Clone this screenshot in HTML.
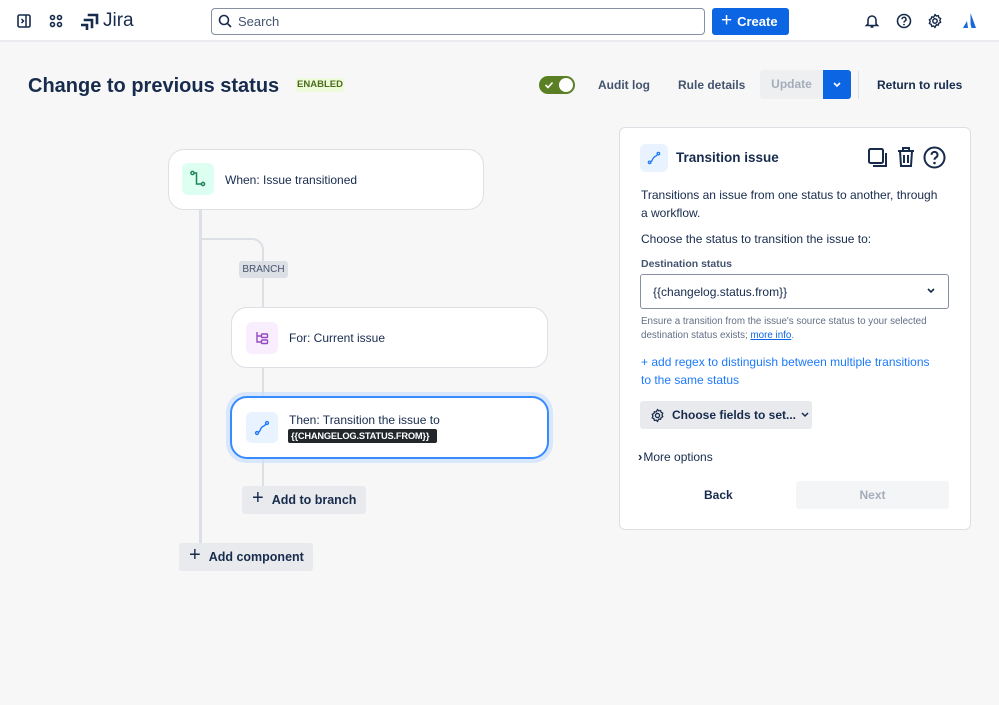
<!DOCTYPE html>
<html><head><meta charset="utf-8"><style>
*{box-sizing:border-box;margin:0;padding:0}
body{width:999px;height:705px;background:#f7f7f7;font-family:"Liberation Sans",sans-serif;color:#172b4d;position:relative;overflow:hidden;font-size:12px}
.a{position:absolute;white-space:nowrap}
.hdr{left:0;top:0;width:999px;height:42px;background:#fff;border-bottom:2px solid #ebecf0}
.card{background:#fff;border:1px solid #dcdfe4;border-radius:16px}
.ic{border-radius:6px;display:flex;align-items:center;justify-content:center}
.btn{background:#e9eaed;border-radius:3px;font-weight:bold;font-size:12.5px;display:flex;align-items:center;color:#172b4d}
.line{background:#dcdfe4}
</style></head><body>
<div class="a hdr"></div>
<svg class="a" style="left:17px;top:14px" width="14" height="14" viewBox="0 0 14 14"><rect x="1" y="1" width="12" height="12" rx="1.5" fill="none" stroke="#172b4d" stroke-width="1.6"/><path d="M9 1v12M4.5 5l2 2-2 2" fill="none" stroke="#172b4d" stroke-width="1.5"/></svg>
<svg class="a" style="left:49px;top:14px" width="14" height="14" viewBox="0 0 14 14"><g fill="none" stroke="#172b4d" stroke-width="1.6"><circle cx="3.5" cy="3.5" r="2"/><circle cx="10.5" cy="3.5" r="2"/><circle cx="3.5" cy="10.5" r="2"/><circle cx="10.5" cy="10.5" r="2"/></g></svg>
<svg class="a" style="left:81px;top:12px" width="18" height="18" viewBox="0 0 18 18"><g stroke="#172b4d" stroke-width="2.6" fill="none" stroke-linecap="square"><path d="M8 3h8v8"/><path d="M4 8h7v7"/><path d="M1 13h5v4"/></g></svg>
<div class="a" style="left:103px;top:10px;font-size:19px;color:#172b4d">Jira</div>
<div class="a" style="left:211px;top:8px;width:494px;height:27px;border:1px solid #8590a2;border-radius:4px"></div>
<svg class="a" style="left:218px;top:14px" width="14" height="14" viewBox="0 0 14 14"><circle cx="6" cy="6" r="4.5" fill="none" stroke="#172b4d" stroke-width="1.6"/><path d="M9.3 9.3L13 13" stroke="#172b4d" stroke-width="1.6"/></svg>
<div class="a" style="left:238px;top:14px;font-size:13px;color:#44546f">Search</div>
<div class="a" style="left:712px;top:8px;width:77px;height:27px;background:#0c66e4;border-radius:3px;color:#fff;font-weight:bold;font-size:13px;display:flex;align-items:center;padding-left:9px"><span style="font-size:19px;font-weight:normal;margin-right:5px;margin-top:-2px">+</span>Create</div>
<svg class="a" style="left:864px;top:13px" width="16" height="16" viewBox="0 0 16 16"><path d="M4 11V7a4 4 0 018 0v4l1.5 1.5h-11z M6.5 14h3" fill="none" stroke="#172b4d" stroke-width="1.6"/></svg>
<svg class="a" style="left:896px;top:13px" width="16" height="16" viewBox="0 0 16 16"><circle cx="8" cy="8" r="6.5" fill="none" stroke="#172b4d" stroke-width="1.6"/><path d="M6 6.3a2 2 0 113 1.7c-.8.4-1 .8-1 1.6" fill="none" stroke="#172b4d" stroke-width="1.5"/><circle cx="8" cy="11.6" r=".9" fill="#172b4d"/></svg>
<svg class="a" style="left:927px;top:13px" width="16" height="16" viewBox="0 0 16 16"><circle cx="8" cy="8" r="2.2" fill="none" stroke="#172b4d" stroke-width="1.5"/><path d="M8 1.5l1.3 1.6 2-.5.5 2 1.9.9-.9 1.9.9 1.9-1.9.9-.5 2-2-.5L8 14.5l-1.3-1.6-2 .5-.5-2-1.9-.9.9-1.9-.9-1.9 1.9-.9.5-2 2 .5z" fill="none" stroke="#172b4d" stroke-width="1.4" stroke-linejoin="round"/></svg>
<svg class="a" style="left:962px;top:12px" width="17" height="17" viewBox="0 0 17 17"><path d="M8.5 1L14 16H9.5L8.5 12zM5 9L1 16h5z" fill="#1868db"/></svg>

<div class="a" style="left:28px;top:75px;font-size:20px;font-weight:bold">Change to previous status</div>
<div class="a" style="left:296px;top:78px;width:48px;height:14px;background:#eefbda;color:#4c6b1f;font-size:9.5px;font-weight:bold;text-align:center;line-height:14px;border-radius:2px">ENABLED</div>
<div class="a" style="left:539px;top:76px;width:36px;height:18px;background:#5b7f24;border-radius:9px"><svg class="a" style="left:5px;top:4px" width="10" height="10" viewBox="0 0 10 10"><path d="M1.5 5l2.5 2.5L8.5 2.5" fill="none" stroke="#fff" stroke-width="1.6"/></svg><div class="a" style="left:20px;top:2px;width:14px;height:14px;border-radius:7px;background:#fff"></div></div>
<div class="a" style="left:598px;top:78px;font-size:12px;font-weight:bold;color:#44546f">Audit log</div>
<div class="a" style="left:678px;top:78px;font-size:12px;font-weight:bold;color:#44546f">Rule details</div>
<div class="a" style="left:760px;top:70px;width:63px;height:29px;background:#eeeff1;border-radius:3px 0 0 3px;color:#a5adba;font-size:12px;font-weight:bold;text-align:center;line-height:29px">Update</div>
<div class="a" style="left:823px;top:70px;width:28px;height:29px;background:#0c66e4;border-radius:0 3px 3px 0"><svg class="a" style="left:9px;top:11px" width="10" height="8" viewBox="0 0 10 8"><path d="M2 2l3 3 3-3" fill="none" stroke="#fff" stroke-width="1.6"/></svg></div>
<div class="a" style="left:858px;top:71px;width:1px;height:28px;background:#dcdfe4"></div>
<div class="a" style="left:877px;top:78px;font-size:12px;font-weight:bold;color:#172b4d">Return to rules</div>

<div class="a line" style="left:199px;top:209px;width:3px;height:336px"></div>
<div class="a" style="left:200px;top:238px;width:64px;height:70px;border-top:2px solid #dcdfe4;border-right:2px solid #dcdfe4;border-top-right-radius:12px"></div>
<div class="a line" style="left:262px;top:368px;width:2px;height:30px"></div>
<div class="a line" style="left:262px;top:459px;width:2px;height:28px"></div>
<div class="a" style="left:239px;top:261px;width:49px;height:17px;background:#dcdfe4;color:#44546f;font-size:10px;text-align:center;line-height:17px;border-radius:3px">BRANCH</div>

<div class="a card" style="left:168px;top:149px;width:316px;height:61px"></div>
<div class="a ic" style="left:182px;top:163px;width:32px;height:32px;background:#dcfff1"><svg width="18" height="18" viewBox="0 0 18 18"><g fill="none" stroke="#1f845a" stroke-width="1.5"><circle cx="3.5" cy="3" r="1.6"/><circle cx="14" cy="14" r="1.6"/><path d="M5 3h2.5v11h5"/></g></svg></div>
<div class="a" style="left:225px;top:173px;font-size:12px">When: Issue transitioned</div>

<div class="a card" style="left:231px;top:307px;width:317px;height:61px"></div>
<div class="a ic" style="left:246px;top:322px;width:32px;height:32px;background:#f8eefe"><svg width="16" height="16" viewBox="0 0 16 16"><g fill="none" stroke="#964ac0" stroke-width="1.4"><path d="M3 2v10h4M3 6h4"/><rect x="7.5" y="4" width="6" height="3.5" rx=".8"/><rect x="7.5" y="10" width="6" height="3.5" rx=".8"/></g></svg></div>
<div class="a" style="left:289px;top:331px;font-size:12px">For: Current issue</div>

<div class="a" style="left:226px;top:392px;width:327px;height:71px;border-radius:20px;background:#cce0ff;opacity:.7"></div>
<div class="a" style="left:230px;top:396px;width:319px;height:63px;border:2px solid #388bff;border-radius:17px;background:#fff"></div>
<div class="a ic" style="left:246px;top:412px;width:32px;height:31px;background:#e9f2ff"><svg width="16" height="16" viewBox="0 0 16 16"><g fill="none" stroke="#1d7afc" stroke-width="1.4"><circle cx="3" cy="13" r="1.4"/><circle cx="13" cy="3" r="1.4"/><path d="M4.3 12.3c2-.5 1.5-3 3.5-5s3-1 4-3.2"/></g></svg></div>
<div class="a" style="left:289px;top:413px;font-size:12px">Then: Transition the issue to</div>
<div class="a" style="left:288px;top:429px;width:149px;height:14px;background:#22272b;color:#fff;font-size:9.3px;font-weight:bold;line-height:14px;padding-left:3px;border-radius:2px;letter-spacing:-.2px">{{CHANGELOG.STATUS.FROM}}</div>

<div class="a btn" style="left:242px;top:486px;width:124px;height:28px;padding-left:10px"><span style="font-size:20px;font-weight:normal;margin-right:8px;margin-top:-3px">+</span>Add to branch</div>
<div class="a btn" style="left:179px;top:543px;width:134px;height:28px;padding-left:10px"><span style="font-size:20px;font-weight:normal;margin-right:8px;margin-top:-3px">+</span>Add component</div>

<div class="a" style="left:619px;top:127px;width:352px;height:403px;background:#fff;border:1px solid #dcdfe4;border-radius:6px"></div>
<div class="a ic" style="left:640px;top:144px;width:28px;height:28px;background:#e9f2ff"><svg width="14" height="14" viewBox="0 0 16 16"><g fill="none" stroke="#1d7afc" stroke-width="1.5"><circle cx="3" cy="13" r="1.4"/><circle cx="13" cy="3" r="1.4"/><path d="M4.3 12.3c2-.5 1.5-3 3.5-5s3-1 4-3.2"/></g></svg></div>
<div class="a" style="left:676px;top:150px;font-size:13.5px;font-weight:bold">Transition issue</div>
<svg class="a" style="left:867px;top:147px" width="22" height="22" viewBox="0 0 22 22"><g fill="none" stroke="#172b4d" stroke-width="2"><rect x="2" y="2" width="14" height="14" rx="1.5"/><path d="M19 6v13H6"/></g></svg>
<svg class="a" style="left:896px;top:146px" width="20" height="22" viewBox="0 0 20 22"><g fill="none" stroke="#172b4d" stroke-width="2"><path d="M2 5h16M7 5V2h6v3M4 5l1 15h10l1-15M8 9v8M12 9v8"/></g></svg>
<svg class="a" style="left:923px;top:146px" width="23" height="23" viewBox="0 0 23 23"><circle cx="11.5" cy="11.5" r="10" fill="none" stroke="#172b4d" stroke-width="2"/><path d="M8.5 8.8a3 3 0 115 2.3c-1.3.8-2 1.2-2 2.6" fill="none" stroke="#172b4d" stroke-width="2"/><circle cx="11.5" cy="17" r="1.3" fill="#172b4d"/></svg>
<div class="a" style="left:641px;top:186px;font-size:12px;line-height:18px">Transitions an issue from one status to another, through<br>a workflow.</div>
<div class="a" style="left:641px;top:232px;font-size:12px">Choose the status to transition the issue to:</div>
<div class="a" style="left:641px;top:258px;font-size:10.5px;font-weight:bold;color:#44546f">Destination status</div>
<div class="a" style="left:640px;top:274px;width:309px;height:35px;border:1px solid #8590a2;border-radius:3px"></div>
<div class="a" style="left:653px;top:285px;font-size:12px">{{changelog.status.from}}</div>
<svg class="a" style="left:926px;top:287px" width="10" height="8" viewBox="0 0 10 8"><path d="M2 2l3 3 3-3" fill="none" stroke="#172b4d" stroke-width="1.6"/></svg>
<div class="a" style="left:641px;top:315px;font-size:9.8px;line-height:14px;color:#626f86">Ensure a transition from the issue's source status to your selected<br>destination status exists; <span style="color:#0c66e4;text-decoration:underline">more info</span>.</div>
<div class="a" style="left:641px;top:353px;font-size:12px;line-height:18px;color:#1d7afc">+ add regex to distinguish between multiple transitions<br>to the same status</div>
<div class="a btn" style="left:640px;top:401px;width:172px;height:28px;padding-left:10px;font-size:12px"><svg width="15" height="15" viewBox="0 0 16 16" style="margin-right:7px"><circle cx="8" cy="8" r="2.2" fill="none" stroke="#172b4d" stroke-width="1.4"/><path d="M8 1.5l1.3 1.6 2-.5.5 2 1.9.9-.9 1.9.9 1.9-1.9.9-.5 2-2-.5L8 14.5l-1.3-1.6-2 .5-.5-2-1.9-.9.9-1.9-.9-1.9 1.9-.9.5-2 2 .5z" fill="none" stroke="#172b4d" stroke-width="1.3" stroke-linejoin="round"/></svg>Choose fields to set...<svg width="10" height="8" viewBox="0 0 10 8" style="margin-left:4px"><path d="M2 2l3 3 3-3" fill="none" stroke="#172b4d" stroke-width="1.5"/></svg></div>
<div class="a" style="left:638px;top:449px;font-size:12px"><b style="font-size:13px">›</b><span style="margin-left:1px">More options</span></div>
<div class="a" style="left:704px;top:488px;font-size:12px;font-weight:bold">Back</div>
<div class="a" style="left:796px;top:481px;width:153px;height:28px;background:#f4f5f7;border-radius:3px;color:#a5adba;font-size:12px;font-weight:bold;text-align:center;line-height:28px">Next</div>
</body></html>
